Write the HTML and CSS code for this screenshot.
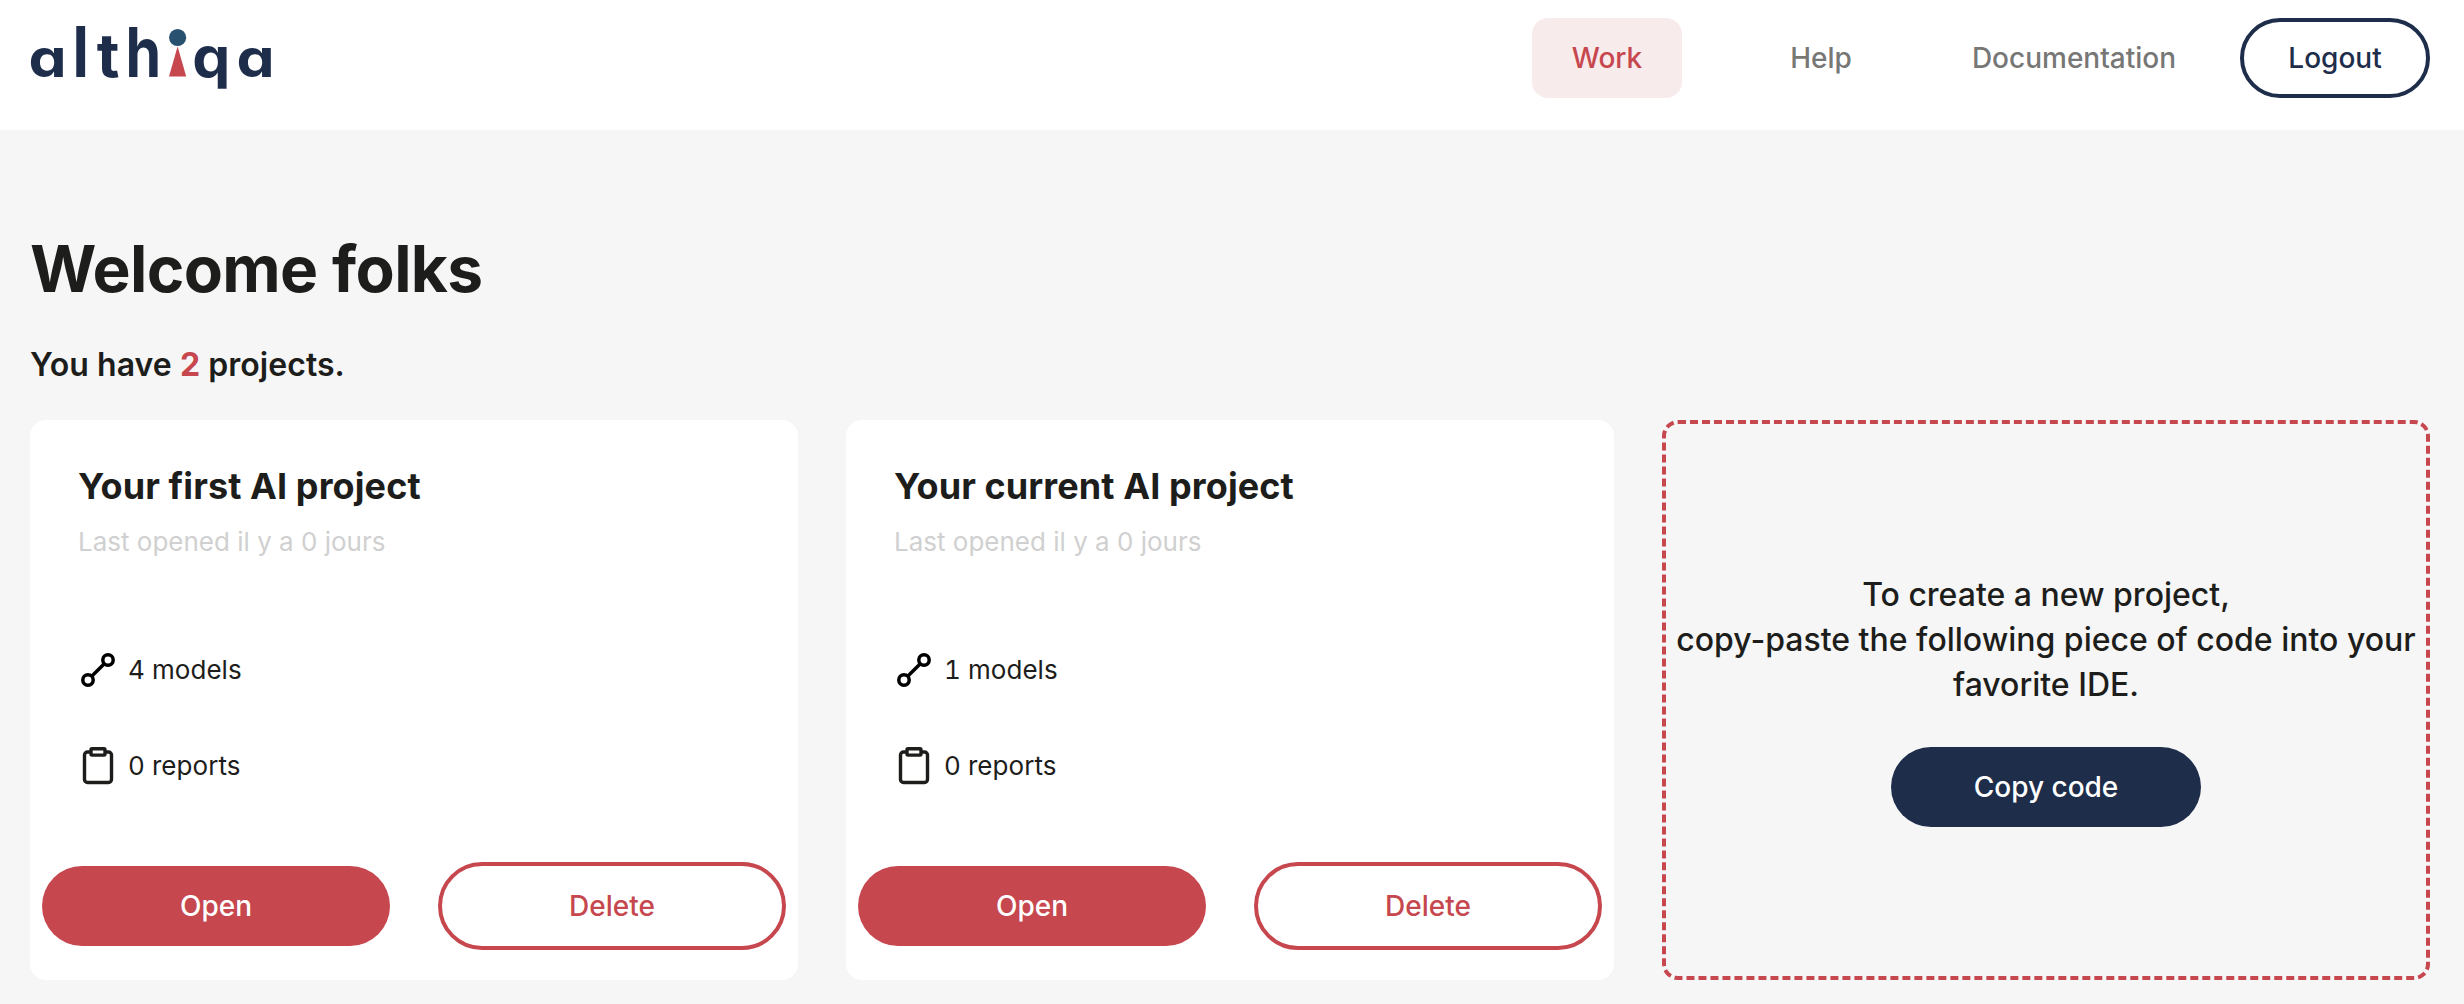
FILE: index.html
```html
<!DOCTYPE html>
<html lang="en">
<head>
<meta charset="utf-8">
<title>althiqa</title>
<link rel="stylesheet" href="styles.css">
</head>
<body>
<svg class="sprite" aria-hidden="true">
  <symbol id="icon-models" viewBox="0 0 40 40">
    <g fill="none" stroke="#000" stroke-width="3.5"><circle cx="10" cy="30" r="5.2"/><circle cx="30" cy="10" r="5.2"/><path d="M13.7 26.3 26.3 13.7"/></g>
  </symbol>
  <symbol id="icon-reports" viewBox="0 0 40 40">
    <g fill="none" stroke="#1d1d1b" stroke-width="3.4" stroke-linejoin="round"><path d="M13 6H9.500a3 3 0 0 0-3 3v24.500a3 3 0 0 0 3 3h21a3 3 0 0 0 3-3v-24.500a3 3 0 0 0-3-3H27"/><rect x="13" y="2.700" width="14" height="6.400" rx="1"/></g>
  </symbol>
</svg>
<header class="header">
  <svg class="logo" width="241" height="80" viewBox="30 18 241 80" role="img" aria-label="althiqa">
    <g class="logo-text">
      <text transform="translate(28.5 76.5) scale(1.12 1)">a</text>
      <text transform="translate(72.400 76.5) scale(1.12 1.3)">l</text>
      <text transform="translate(96.800 76.5) scale(1.15 1.12)">t</text>
      <text transform="translate(125.500 76.5) scale(1.06 1.27)">h</text>
      <text transform="translate(192.300 76.5) scale(1.12 1.03)">q</text>
      <text transform="translate(236.500 76.5) scale(1.12 1)">a</text>
    </g>
    <circle cx="177.6" cy="37.5" r="8.6" fill="#28506f"/>
    <path d="M177.6 46.5 186.2 76.5H169z" fill="#c6474e"/>
  </svg>
  <nav class="nav">
    <a class="nav-link active">Work</a>
    <a class="nav-link help">Help</a>
    <a class="nav-link docs">Documentation</a>
    <a class="logout">Logout</a>
  </nav>
</header>
<main class="main">
  <h1 class="title">Welcome folks</h1>
  <p class="summary">You have <span class="count">2</span> projects.</p>
  <div class="cards">
    <section class="card">
      <h2 class="card-title">Your first AI project</h2>
      <p class="opened">Last opened il y a 0 jours</p>
      <div class="stats">
        <div class="stat"><svg class="icon"><use href="#icon-models"/></svg><span>4 models</span></div>
        <div class="stat"><svg class="icon"><use href="#icon-reports"/></svg><span>0 reports</span></div>
      </div>
      <div class="actions"><button class="btn open">Open</button><button class="btn delete">Delete</button></div>
    </section>
    <section class="card">
      <h2 class="card-title">Your current AI project</h2>
      <p class="opened">Last opened il y a 0 jours</p>
      <div class="stats">
        <div class="stat"><svg class="icon"><use href="#icon-models"/></svg><span>1 models</span></div>
        <div class="stat"><svg class="icon"><use href="#icon-reports"/></svg><span>0 reports</span></div>
      </div>
      <div class="actions"><button class="btn open">Open</button><button class="btn delete">Delete</button></div>
    </section>
    <section class="create">
      <p class="create-text">To create a new project,<br>copy-paste the following piece of code into your favorite IDE.</p>
      <button class="btn copy">Copy code</button>
    </section>
  </div>
</main>
</body>
</html>
```
FILE: styles.css
```css
* { box-sizing: border-box; margin: 0; padding: 0; }
body { background: #f6f6f6; color: #1d1d1b; font-family: Inter, "Liberation Sans", sans-serif; }
.sprite { display: none; }
.header { display: flex; justify-content: space-between; align-items: flex-start; height: 130px; padding: 18px 34px 0 30px; background: #fff; }
.logo { display: block; overflow: visible; }
.logo-text { font-size: 54px; font-weight: 700; fill: #1d2d4a; font-feature-settings: "cv11"; }
.nav { display: flex; }
.nav-link, .logout { display: flex; align-items: center; justify-content: center; height: 80px; font-size: 28px; font-weight: 500; color: #777775; }
.nav-link { width: 150px; border-radius: 16px; }
.active { background: #f8ebec; color: #c6474e; }
.help { margin-left: 64px; }
.docs { width: 284px; margin: 0 24px 0 36px; }
.logout { width: 190px; border: 4px solid #1d2d4a; border-radius: 40px; color: #1d2d4a; }
.main { padding: 100px 34px 24px 30px; }
.title { font-size: 64px; line-height: 78px; font-weight: 700; letter-spacing: -0.65px; }
.summary { margin: 37px 0 35px; font-size: 32px; line-height: 40px; font-weight: 600; letter-spacing: 0.05px; }
.count { color: #c6474e; font-weight: 700; }
.cards { display: grid; grid-template-columns: repeat(3, 768px); gap: 48px; }
.card { display: flex; flex-direction: column; height: 560px; padding: 44px 12px 30px; border-radius: 16px; background: #fff; }
.card-title { padding-left: 36px; font-size: 36px; line-height: 44px; font-weight: 700; letter-spacing: 0.1px; }
.opened { margin-top: 18px; padding-left: 36px; font-size: 26px; line-height: 32px; color: #d0d0d0; }
.stats { display: grid; gap: 56px; padding: 92px 0 0 36px; }
.stat { display: flex; align-items: center; gap: 10px; height: 40px; font-size: 26px; letter-spacing: 0.05px; font-variant-numeric: tabular-nums; }
.stat span { padding-bottom: 2px; }
.icon { flex: none; width: 40px; height: 40px; }
.actions { display: flex; align-items: center; gap: 48px; margin-top: auto; }
.btn { height: 80px; border: 0; border-radius: 44px; font: 500 28px Inter, "Liberation Sans", sans-serif; color: #fff; }
.open, .delete { width: 348px; }
.open { background: #c6474e; }
.delete { height: 88px; border: 4px solid #c6474e; background: #fff; color: #c6474e; }
.create { display: flex; flex-direction: column; align-items: center; height: 560px; padding-top: 148px; border: 4px dashed #c6474e; border-radius: 16px; }
.create-text { font-size: 32px; line-height: 45px; font-weight: 500; text-align: center; }
.copy { width: 310px; margin-top: 40px; background: #1d2d4a; }
```
